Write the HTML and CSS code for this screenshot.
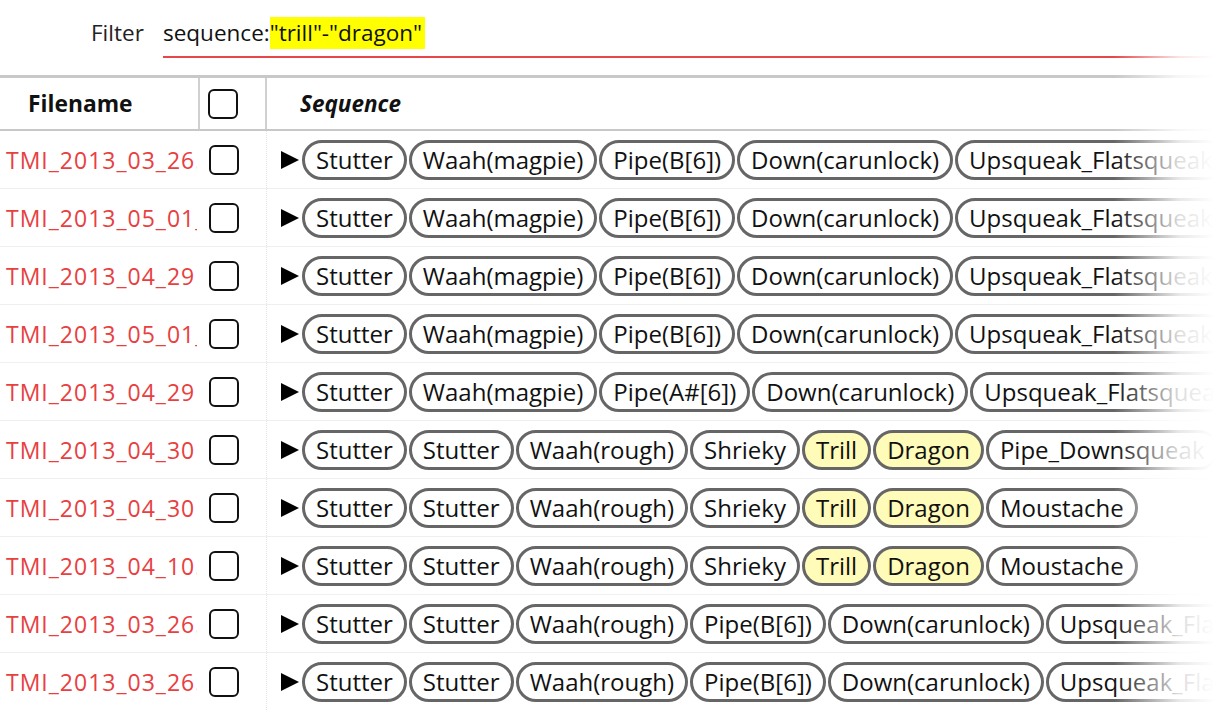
FILE: index.html
```html
<!DOCTYPE html>
<html lang="en">
<head>
<meta charset="utf-8">
<title>Sequence filter</title>
<link rel="stylesheet" href="styles.css">
</head>
<body>
<div class="page">
  <div class="filter">
    <span class="filter-label">Filter</span>
    <div class="filter-input"><span class="q-key">sequence:</span><mark class="q-hit">"trill"-"dragon"</mark></div>
  </div>

  <div class="table">
    <div class="row head">
      <div class="cell c-name">Filename</div>
      <div class="cell c-check"><span class="box"></span></div>
      <div class="cell c-seq">Sequence</div>
    </div>

    <div class="row">
      <div class="cell c-name">TMI_2013_03_26.wav</div>
      <div class="cell c-check"><span class="box"></span></div>
      <div class="cell c-seq"><svg class="tri" viewBox="0 0 20 20" aria-hidden="true"><polygon points="1,1 19,10 1,19"/></svg><span class="pill">Stutter</span><span class="pill">Waah(magpie)</span><span class="pill">Pipe(B[6])</span><span class="pill">Down(carunlock)</span><span class="pill">Upsqueak_Flatsqueak</span><span class="pill">Moustache</span></div>
    </div>
    <div class="row">
      <div class="cell c-name">TMI_2013_05_01_07.wav</div>
      <div class="cell c-check"><span class="box"></span></div>
      <div class="cell c-seq"><svg class="tri" viewBox="0 0 20 20" aria-hidden="true"><polygon points="1,1 19,10 1,19"/></svg><span class="pill">Stutter</span><span class="pill">Waah(magpie)</span><span class="pill">Pipe(B[6])</span><span class="pill">Down(carunlock)</span><span class="pill">Upsqueak_Flatsqueak</span><span class="pill">Moustache</span></div>
    </div>
    <div class="row">
      <div class="cell c-name">TMI_2013_04_29 .wav</div>
      <div class="cell c-check"><span class="box"></span></div>
      <div class="cell c-seq"><svg class="tri" viewBox="0 0 20 20" aria-hidden="true"><polygon points="1,1 19,10 1,19"/></svg><span class="pill">Stutter</span><span class="pill">Waah(magpie)</span><span class="pill">Pipe(B[6])</span><span class="pill">Down(carunlock)</span><span class="pill">Upsqueak_Flatsqueak</span><span class="pill">Moustache</span></div>
    </div>
    <div class="row">
      <div class="cell c-name">TMI_2013_05_01_09.wav</div>
      <div class="cell c-check"><span class="box"></span></div>
      <div class="cell c-seq"><svg class="tri" viewBox="0 0 20 20" aria-hidden="true"><polygon points="1,1 19,10 1,19"/></svg><span class="pill">Stutter</span><span class="pill">Waah(magpie)</span><span class="pill">Pipe(B[6])</span><span class="pill">Down(carunlock)</span><span class="pill">Upsqueak_Flatsqueak</span><span class="pill">Moustache</span></div>
    </div>
    <div class="row">
      <div class="cell c-name">TMI_2013_04_29 .wav</div>
      <div class="cell c-check"><span class="box"></span></div>
      <div class="cell c-seq"><svg class="tri" viewBox="0 0 20 20" aria-hidden="true"><polygon points="1,1 19,10 1,19"/></svg><span class="pill">Stutter</span><span class="pill">Waah(magpie)</span><span class="pill">Pipe(A#[6])</span><span class="pill">Down(carunlock)</span><span class="pill">Upsqueak_Flatsqueak</span><span class="pill">Moustache</span></div>
    </div>
    <div class="row">
      <div class="cell c-name">TMI_2013_04_30 .wav</div>
      <div class="cell c-check"><span class="box"></span></div>
      <div class="cell c-seq"><svg class="tri" viewBox="0 0 20 20" aria-hidden="true"><polygon points="1,1 19,10 1,19"/></svg><span class="pill">Stutter</span><span class="pill">Stutter</span><span class="pill">Waah(rough)</span><span class="pill">Shrieky</span><span class="pill hit">Trill</span><span class="pill hit">Dragon</span><span class="pill">Pipe_Downsqueak</span><span class="pill">Moustache</span></div>
    </div>
    <div class="row">
      <div class="cell c-name">TMI_2013_04_30 .wav</div>
      <div class="cell c-check"><span class="box"></span></div>
      <div class="cell c-seq"><svg class="tri" viewBox="0 0 20 20" aria-hidden="true"><polygon points="1,1 19,10 1,19"/></svg><span class="pill">Stutter</span><span class="pill">Stutter</span><span class="pill">Waah(rough)</span><span class="pill">Shrieky</span><span class="pill hit">Trill</span><span class="pill hit">Dragon</span><span class="pill">Moustache</span></div>
    </div>
    <div class="row">
      <div class="cell c-name">TMI_2013_04_10.wav</div>
      <div class="cell c-check"><span class="box"></span></div>
      <div class="cell c-seq"><svg class="tri" viewBox="0 0 20 20" aria-hidden="true"><polygon points="1,1 19,10 1,19"/></svg><span class="pill">Stutter</span><span class="pill">Stutter</span><span class="pill">Waah(rough)</span><span class="pill">Shrieky</span><span class="pill hit">Trill</span><span class="pill hit">Dragon</span><span class="pill">Moustache</span></div>
    </div>
    <div class="row">
      <div class="cell c-name">TMI_2013_03_26.wav</div>
      <div class="cell c-check"><span class="box"></span></div>
      <div class="cell c-seq"><svg class="tri" viewBox="0 0 20 20" aria-hidden="true"><polygon points="1,1 19,10 1,19"/></svg><span class="pill">Stutter</span><span class="pill">Stutter</span><span class="pill">Waah(rough)</span><span class="pill">Pipe(B[6])</span><span class="pill">Down(carunlock)</span><span class="pill">Upsqueak_Flatsqueak</span></div>
    </div>
    <div class="row">
      <div class="cell c-name">TMI_2013_03_26.wav</div>
      <div class="cell c-check"><span class="box"></span></div>
      <div class="cell c-seq"><svg class="tri" viewBox="0 0 20 20" aria-hidden="true"><polygon points="1,1 19,10 1,19"/></svg><span class="pill">Stutter</span><span class="pill">Stutter</span><span class="pill">Waah(rough)</span><span class="pill">Pipe(B[6])</span><span class="pill">Down(carunlock)</span><span class="pill">Upsqueak_Flatsqueak</span></div>
    </div>
  </div>

  <div class="fade"></div>
</div>
</body>
</html>
```

FILE: styles.css
```css
* { box-sizing: border-box; }

html, body {
  margin: 0;
  padding: 0;
  background: #fff;
}

body {
  font-family: "Open Sans", "Noto Sans", sans-serif;
  color: #111;
  overflow: hidden;
}

.page {
  position: relative;
  width: 1214px;
  height: 710px;
  overflow: hidden;
}

/* ---------- filter bar ---------- */
.filter {
  height: 75px;
  display: flex;
  align-items: flex-start;
  padding: 17px 0 0 91px;
}

.filter-label {
  width: 72px;
  font-size: 22.5px;
  line-height: 32px;
  color: #222;
}

.filter-input {
  flex: 1;
  height: 41px;
  border-bottom: 2px solid #e8474a;
  font-size: 22.5px;
  line-height: 32px;
  color: #111;
  white-space: nowrap;
}

.q-hit {
  background: #ffff00;
  color: #111;
  display: inline-block;
  height: 32px;
  padding-right: 3px;
}

/* ---------- table ---------- */
.table {
  border-top: 3px solid #c8c8c8;
}

.row {
  display: grid;
  grid-template-columns: 200px 67px 1fr;
  height: 58px;
  border-bottom: 1px solid #efefef;
}

.row.head {
  height: 53px;
  border-bottom: 2px solid #c8c8c8;
}

.cell {
  display: flex;
  align-items: center;
  overflow: hidden;
  white-space: nowrap;
}

.c-name {
  padding-left: 6px;
  font-size: 23px;
  letter-spacing: 1px;
  color: #e8403f;
  border-right: 1px dotted #e4e4e4;
  clip-path: inset(0 3px 0 0);
}

.c-check {
  padding-left: 9px;
  border-right: 1px dotted #e4e4e4;
}

.head .c-name,
.head .c-check {
  border-right: 2px solid #d0d0d0;
}

.head .c-name {
  padding-left: 28px;
  color: #111;
  font-weight: 700;
  font-size: 22.8px;
  letter-spacing: 0;
  clip-path: none;
}

.head .c-check {
  padding-left: 8px;
}

.c-seq {
  padding-left: 13px;
  font-size: 24px;
}

.head .c-seq {
  padding-left: 33px;
  font-weight: 700;
  font-style: italic;
  font-size: 22.5px;
}

.box {
  display: block;
  width: 30px;
  height: 30px;
  border: 2.5px solid #111;
  border-radius: 6px;
}

.tri {
  flex: none;
  width: 20px;
  height: 20px;
  margin-right: 2px;
  fill: #000;
}

.pill {
  flex: none;
  display: inline-flex;
  align-items: center;
  height: 40px;
  padding: 0 11px;
  margin-right: 2px;
  border: 3px solid #666;
  border-radius: 20px;
  background: #fff;
  color: #111;
}

.pill.hit {
  background: #fffbb8;
}

/* right-edge fade over the table */
.fade {
  position: absolute;
  top: 0;
  right: 0;
  width: 100px;
  height: 100%;
  background: linear-gradient(to right, rgba(255,255,255,0), rgba(255,255,255,0.85) 65%, #fff);
  pointer-events: none;
}
```
